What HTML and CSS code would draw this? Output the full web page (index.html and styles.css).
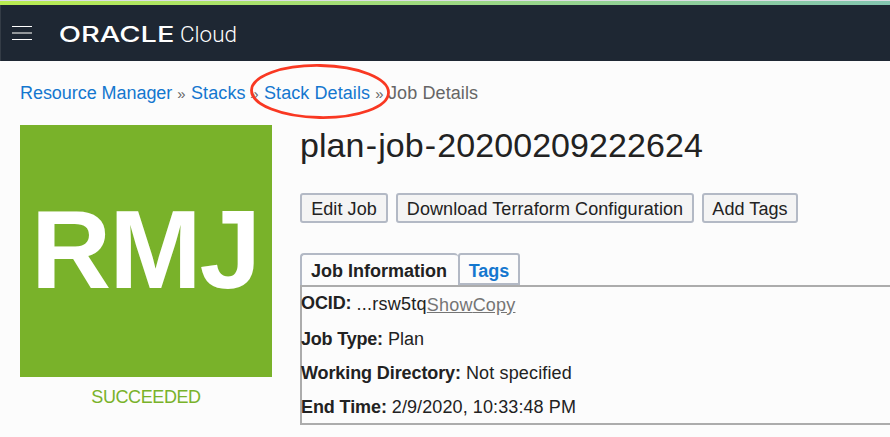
FILE: index.html
```html
<!DOCTYPE html>
<html lang="en">
<head>
<meta charset="utf-8">
<title>Job Details</title>
<link rel="stylesheet" href="styles.css">
</head>
<body>
<div class="accent"></div>
<header class="topbar">
  <div class="menu"><i></i><i></i><i></i></div>
  <svg class="brand" width="190" height="30" viewBox="0 0 190 30">
    <text class="oracle" x="-1" y="20" textLength="94" lengthAdjust="spacingAndGlyphs" transform="scale(1.23 1)">ORACLE</text>
    <text class="cloud" x="120" y="20" textLength="57" lengthAdjust="spacingAndGlyphs">Cloud</text>
  </svg>
</header>
<nav class="crumbs">
  <a class="c1">Resource Manager</a><span class="sep">»</span><a class="c2">Stacks</a><span class="sep">»</span><span class="marked"><a class="c3">Stack Details</a><svg class="ring" width="144" height="60" viewBox="0 0 144 60"><ellipse cx="72" cy="29.500" rx="68.500" ry="26" transform="rotate(1 72 30)"/></svg></span><span class="sep">»</span><span class="current">Job Details</span>
</nav>
<main class="page">
  <aside class="side">
    <div class="tile"><span>RMJ</span></div>
    <div class="status">SUCCEEDED</div>
  </aside>
  <section class="content">
    <h1>plan<span class="dash">-</span>job<span class="dash">-</span>20200209222624</h1>
    <div class="actions">
      <button class="b1">Edit Job</button>
      <button class="b2">Download Terraform Configuration</button>
      <button class="b3">Add Tags</button>
    </div>
    <div class="tabs"><div class="tab active"><span>Job Information</span></div><div class="tab other"><span>Tags</span></div></div>
    <div class="panel">
      <p class="ocid"><b>OCID:</b> <span class="id">...rsw5tq</span><a>Show</a><a>Copy</a></p>
      <p class="type"><b>Job Type:</b> <span>Plan</span></p>
      <p class="dir"><b>Working Directory:</b> <span>Not specified</span></p>
      <p class="end"><b>End Time:</b> <span>2/9/2020, 10:33:48 PM</span></p>
    </div>
  </section>
</main>
</body>
</html>
```

FILE: styles.css
```css
* { box-sizing: border-box; }
body {
  margin: 0;
  height: 437px;
  overflow: hidden;
  background: #fcfcfc;
  color: #222;
  font: 18px/24px "Liberation Sans", Arial, sans-serif;
}
.accent {
  height: 5px;
  border-top: 1px solid #dcdde3;
  background: linear-gradient(90deg, #b9ec51, #93d293 68%, #83c5b0);
}
.topbar {
  height: 56px;
  display: flex;
  background: #1e2733;
  border-left: 1px solid #343c46;
  padding-left: 11px;
}
.menu { width: 20px; margin: 21px 28px 0 0; }
.menu i { display: block; height: 1px; background: #fff; }
.menu i:nth-child(2) { height: 2px; margin: 5px 0; background: #93979b; }
.brand { margin-top: 17px; fill: #fff; }
.oracle { font: 500 21px Inter, sans-serif; }
.cloud { font: 300 22.500px Roboto, sans-serif; }
.crumbs { display: flex; padding: 20px 20px 0; height: 64px; white-space: nowrap; }
.crumbs a { color: #1477cf; }
.sep { width: 19px; text-align: center; color: #666; font-size: 15px; line-height: 25px; }
.c1 { width: 152px; letter-spacing: -0.050px; }
.c2 { width: 54px; letter-spacing: 0.100px; }
.crumbs .c3 { display: block; width: 106px; letter-spacing: 0.080px; }
.marked { position: relative; }
.ring { position: absolute; left: -16px; top: -19px; fill: none; stroke: #f93822; stroke-width: 2.800; }
.current { color: #666; margin-left: -1px; letter-spacing: 0.100px; }
.page { display: flex; }
.side { width: 252px; margin: 0 28px 0 20px; }
.tile {
  height: 252px;
  padding-left: 11px;
  background: #79b22a;
  color: #fff;
  font-weight: bold;
  font-size: 111px;
  line-height: 251px;
  letter-spacing: -2px;
}
.status { margin-top: 8px; color: #79b22a; text-align: center; letter-spacing: -0.400px; }
.content { flex: 1; min-width: 0; }
h1 { margin: 0; font-weight: normal; font-size: 34px; line-height: 40px; height: 68px; letter-spacing: 0.060px; }
.dash { display: inline-block; width: 13.600px; text-align: center; }
.actions { display: flex; gap: 8px; }
button {
  height: 30px;
  padding: 1px 0 0;
  border: 2px solid #b3b9c5;
  border-radius: 3px;
  background: #f4f4f4;
  color: #222;
  font: inherit;
  letter-spacing: 0.080px;
  white-space: nowrap;
}
.b1 { width: 88px; }
.b2 { width: 298px; }
.b3 { width: 96px; }
.tabs { display: flex; margin-top: 30px; height: 32px; font-weight: bold; }
.tab { border: 2px solid #b3b9c5; border-bottom: 0; border-radius: 4px 4px 0 0; text-align: center; line-height: 32px; }
.active { width: 158px; border-right: 0; padding-right: 2px; }
.other { width: 62px; height: 32px; color: #1477cf; border-bottom: 2px solid #b3b9c5; border-radius: 3px 3px 0 0; }
.panel { height: 140px; border: 2px solid #acacac; border-right: 0; white-space: nowrap; }
.panel p { margin: 0 0 0 -1px; height: 34px; line-height: 34px; }
.panel b { letter-spacing: -0.100px; }
.panel .ocid { height: 35px; }
.ocid b { position: relative; top: -1px; }
.id { letter-spacing: 0.250px; }
.ocid a { position: relative; top: 1px; color: #757575; text-decoration: underline; letter-spacing: 0.200px; }
.type b { letter-spacing: -0.200px; }
.dir span { letter-spacing: 0.150px; }
.end span { letter-spacing: 0.100px; }
```
